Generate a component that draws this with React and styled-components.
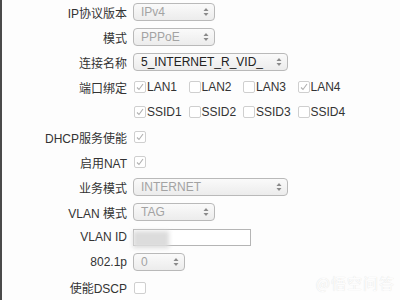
import styled, { createGlobalStyle } from 'styled-components';

const GlobalStyle = createGlobalStyle`
    html, body {
        margin: 0;
        padding: 0;
        background: #fdfdfd;
    }
    body {
        width: 400px;
        height: 300px;
        overflow: hidden;
        font-family: "Liberation Sans", "Noto Sans CJK SC", sans-serif;
        font-size: 12px;
        color: #333;
    }
`

const Page = styled.div`
    position: relative;
    width: 400px;
    height: 300px;
    display: flex;
    border-left: 2px solid #4a4a4a;
    box-sizing: border-box;
`

const Form = styled.div`
    display: flex;
    flex-direction: column;
    margin-top: -0.5px;
`

const Row = styled.div`
    display: grid;
    grid-template-columns: 125px auto;
    column-gap: 6px;
    align-items: center;
    height: 25.4px;
`

const Label = styled.div`
    text-align: right;
    white-space: nowrap;
    color: #333;
`

const SelectBox = styled.div`
    width: ${p => p.$w}px;
    height: 18px;
    box-sizing: border-box;
    border: 1px solid #b9b9b9;
    border-radius: 4px;
    background: linear-gradient(#fafafa, #ececec);
    display: flex;
    align-items: center;
    justify-content: space-between;
    padding: 0 5px 0 7px;
    color: ${p => (p.$active ? '#222' : '#a3a3a3')};
    white-space: nowrap;
    overflow: hidden;
`

const TextInput = styled.div`
    position: relative;
    width: 118px;
    height: 17px;
    box-sizing: border-box;
    border: 1px solid #b5b5b5;
    background: #fff;
`

const Blur = styled.div`
    position: absolute;
    left: -1px;
    top: 1px;
    width: 36px;
    height: 17px;
    background: #dcdcdc;
    filter: blur(2px);
`

const Checks = styled.div`
    display: grid;
    grid-template-columns: repeat(4, 54.5px);
`

const CheckItem = styled.label`
    display: flex;
    align-items: center;
    gap: 1px;
    white-space: nowrap;
    color: #333;
`

const Box = styled.span`
    width: 10px;
    height: 10px;
    border: 1px solid #cfcfcf;
    border-radius: 2px;
    background: #fff;
    display: inline-flex;
    align-items: center;
    justify-content: center;
    margin-left: 1px;
`

const Watermark = styled.div`
    position: absolute;
    right: 5px;
    bottom: 7px;
    font-size: 15px;
    color: #fdfdfd;
    text-shadow: 0 0 1px #d8d8d8;
    font-family: "Noto Sans CJK SC", sans-serif;
    letter-spacing: 1px;
`

function Arrows() {
    return (
        <svg width="6" height="10" viewBox="0 0 6 10">
            <path d="M3 1 L5.5 4 L0.5 4 Z" fill="#8a8a8a" />
            <path d="M3 9 L5.5 6 L0.5 6 Z" fill="#8a8a8a" />
        </svg>
    )
}

function Select({ value, width, active }) {
    return (
        <SelectBox $w={width} $active={active}>
            <span>{value}</span>
            <Arrows />
        </SelectBox>
    )
}

function Check({ checked, children }) {
    return (
        <CheckItem>
            <Box>
                {checked && (
                    <svg width="8" height="8" viewBox="0 0 8 8">
                        <path d="M1 4.5 L3 6.5 L7 1" stroke="#b0b0b0" strokeWidth="1.1" fill="none" />
                    </svg>
                )}
            </Box>
            {children}
        </CheckItem>
    )
}

export default function App() {
    return (
        <>
            <GlobalStyle />
            <Page>
                <Form>
                    <Row>
                        <Label>IP协议版本</Label>
                        <Select value="IPv4" width={82} />
                    </Row>
                    <Row>
                        <Label>模式</Label>
                        <Select value="PPPoE" width={82} />
                    </Row>
                    <Row>
                        <Label>连接名称</Label>
                        <Select value="5_INTERNET_R_VID_" width={155} active />
                    </Row>
                    <Row>
                        <Label>端口绑定</Label>
                        <Checks>
                            <Check checked>LAN1</Check>
                            <Check>LAN2</Check>
                            <Check>LAN3</Check>
                            <Check checked>LAN4</Check>
                        </Checks>
                    </Row>
                    <Row>
                        <Label></Label>
                        <Checks>
                            <Check checked>SSID1</Check>
                            <Check>SSID2</Check>
                            <Check>SSID3</Check>
                            <Check>SSID4</Check>
                        </Checks>
                    </Row>
                    <Row>
                        <Label>DHCP服务使能</Label>
                        <Checks><Check checked /></Checks>
                    </Row>
                    <Row>
                        <Label>启用NAT</Label>
                        <Checks><Check checked /></Checks>
                    </Row>
                    <Row>
                        <Label>业务模式</Label>
                        <Select value="INTERNET" width={155} />
                    </Row>
                    <Row>
                        <Label>VLAN 模式</Label>
                        <Select value="TAG" width={82} />
                    </Row>
                    <Row>
                        <Label>VLAN ID</Label>
                        <TextInput><Blur /></TextInput>
                    </Row>
                    <Row>
                        <Label>802.1p</Label>
                        <Select value="0" width={52} />
                    </Row>
                    <Row>
                        <Label>使能DSCP</Label>
                        <Checks><Check /></Checks>
                    </Row>
                </Form>
                <Watermark>@悟空问答</Watermark>
            </Page>
        </>
    )
}
